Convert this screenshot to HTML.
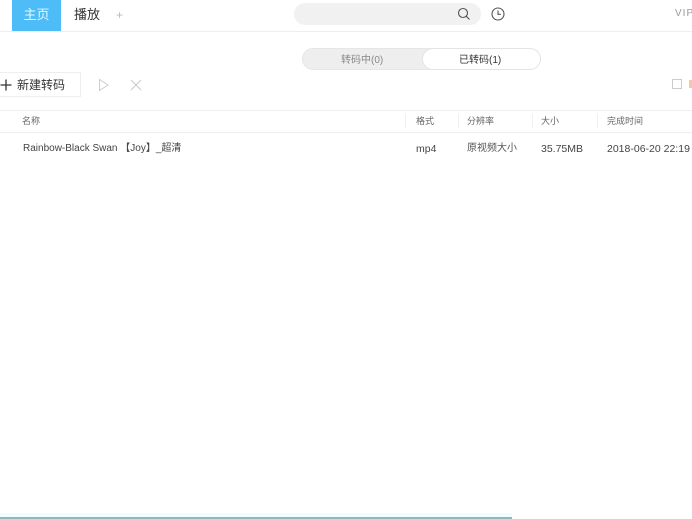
<!DOCTYPE html>
<html><head><meta charset="utf-8"><style>
body{margin:0;width:692px;height:519px;overflow:hidden;background:#fff;font-family:"Liberation Sans","Noto Sans CJK SC",sans-serif;position:relative;color:#333}
.a{position:absolute;white-space:nowrap}
.t{height:14px;line-height:14px}
</style></head><body>
<div class="a" style="left:12px;top:0;width:49px;height:32px;background:#4dbcf7;color:#e8f7ff;font-size:13px;line-height:30px;text-align:center">主页</div>
<div class="a" style="left:74px;top:7px;font-size:13px;line-height:16px;color:#333">播放</div>
<div class="a" style="left:116px;top:7px;font-size:12px;line-height:16px;color:#bbb">+</div>
<div class="a" style="left:0;top:31px;width:692px;height:1px;background:#eee"></div>
<div class="a" style="left:294px;top:3px;width:187px;height:22px;border-radius:11px;background:#f1f1f1"></div>
<svg class="a" style="left:457px;top:7px" width="14" height="14"><circle cx="6" cy="6" r="4.5" fill="none" stroke="#555" stroke-width="1.1"/><line x1="9.3" y1="9.3" x2="12.5" y2="12.5" stroke="#555" stroke-width="1.1"/></svg>
<svg class="a" style="left:490px;top:6px" width="16" height="16"><circle cx="8" cy="8" r="6" fill="none" stroke="#555" stroke-width="1.1"/><path d="M8 4.5V8.3H10.8" fill="none" stroke="#555" stroke-width="1.1"/></svg>
<div class="a" style="left:675px;top:8px;font-size:10px;line-height:12px;color:#999;letter-spacing:1px">VIP</div>
<div class="a" style="left:302px;top:48px;width:238px;height:22px;border-radius:11px;background:#eee;border:1px solid #e6e6e6;box-sizing:border-box"></div>
<div class="a" style="left:422px;top:48px;width:119px;height:22px;border-radius:11px;background:#fff;border:1px solid #e3e3e3;box-sizing:border-box"></div>
<div class="a t" style="left:341px;top:54px;font-size:10px;color:#888">转码中(0)</div>
<div class="a t" style="left:459px;top:54px;font-size:10px;color:#333">已转码(1)</div>
<div class="a" style="left:-2px;top:72px;width:83px;height:25px;border:1px solid #eee;box-sizing:border-box"></div>
<svg class="a" style="left:0;top:79px" width="12" height="12"><path d="M6 0.5V11.5M0.5 6H11.5" stroke="#333" stroke-width="1.3"/></svg>
<div class="a" style="left:17px;top:77px;font-size:12px;line-height:16px;color:#333">新建转码</div>
<svg class="a" style="left:98px;top:78px" width="12" height="14"><path d="M1.5 1.5L10 7L1.5 12.5Z" fill="none" stroke="#ccc"/></svg>
<svg class="a" style="left:130px;top:79px" width="12" height="12"><path d="M1 1L11 11M11 1L1 11" stroke="#ccc" stroke-width="1.1"/></svg>
<div class="a" style="left:672px;top:79px;width:10px;height:10px;border:1px solid #ccc;box-sizing:border-box"></div>
<div class="a" style="left:689px;top:80px;width:3px;height:8px;background:#f3c9a5"></div>
<div class="a" style="left:0;top:110px;width:692px;height:1px;background:#eee"></div>
<div class="a" style="left:0;top:132px;width:692px;height:1px;background:#eee"></div>
<div class="a t" style="left:22px;top:114px;font-size:9px;color:#666">名称</div>
<div class="a t" style="left:416px;top:114px;font-size:9px;color:#666">格式</div>
<div class="a t" style="left:467px;top:114px;font-size:9px;color:#666">分辨率</div>
<div class="a t" style="left:541px;top:114px;font-size:9px;color:#666">大小</div>
<div class="a t" style="left:607px;top:114px;font-size:9px;color:#666">完成时间</div>
<div class="a" style="left:405px;top:114px;width:1px;height:14px;background:#f0f0f0"></div>
<div class="a" style="left:458px;top:114px;width:1px;height:14px;background:#f0f0f0"></div>
<div class="a" style="left:532px;top:114px;width:1px;height:14px;background:#f0f0f0"></div>
<div class="a" style="left:597px;top:114px;width:1px;height:14px;background:#f0f0f0"></div>
<div class="a t" style="left:23px;top:142px;font-size:10px;color:#444">Rainbow-Black Swan 【Joy】_超清</div>
<div class="a t" style="left:416px;top:142px;font-size:10.5px;color:#444">mp4</div>
<div class="a t" style="left:467px;top:142px;font-size:10px;color:#555">原视频大小</div>
<div class="a t" style="left:541px;top:142px;font-size:10.5px;color:#444">35.75MB</div>
<div class="a t" style="left:607px;top:142px;font-size:10.5px;color:#444">2018-06-20 22:19</div>
<div class="a" style="left:0;top:513px;width:512px;height:4px;background:#f0fcfd"></div>
<div class="a" style="left:0;top:517px;width:512px;height:2px;background:#8fb7c0"></div>
</body></html>
